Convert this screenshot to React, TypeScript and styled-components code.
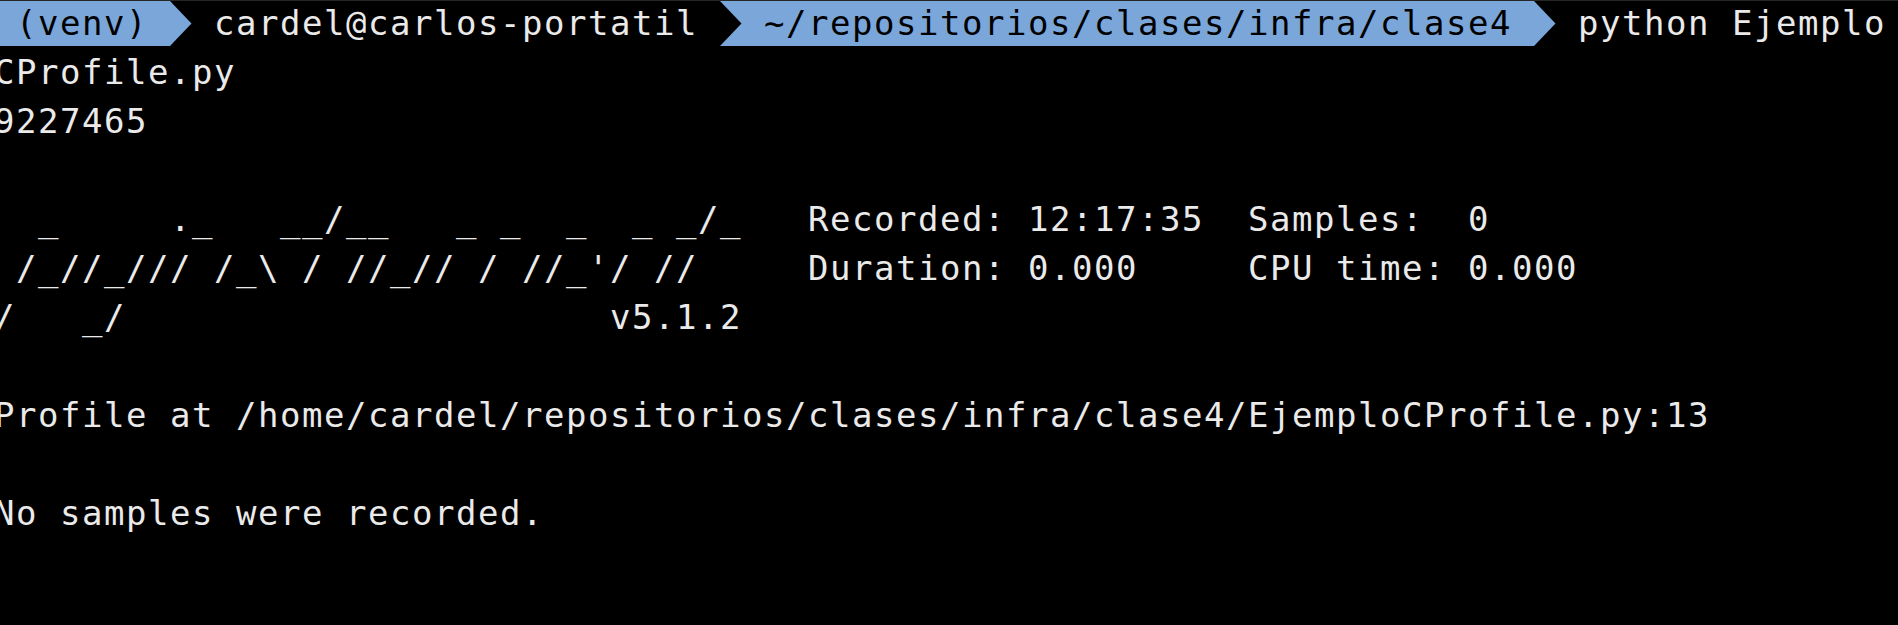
import React from "react";
import styled, { createGlobalStyle } from "styled-components";

const GlobalStyle = createGlobalStyle`
  html, body {
    margin: 0;
    padding: 0;
    background: #000000;
  }
  body {
    overflow: hidden;
  }
`;

const BLUE = "#7aa6da";
const FG = "#eaeaea";

const Screen = styled.div`
  width: 1898px;
  height: 625px;
  background: #000000;
  overflow: hidden;
  box-sizing: border-box;
  border-top: 1px solid #262626;
`;

const Grid = styled.div`
  margin: -2px 0 0 -6px;
  font-family: "DejaVu Sans Mono", "Liberation Mono", monospace;
  font-size: 34px;
  letter-spacing: 1.53px;
  line-height: 49px;
  color: ${FG};
  white-space: pre;
`;

const Line = styled.div`
  height: 49px;
`;

const PromptLine = styled.div`
  height: 49px;
  box-sizing: border-box;
  padding-top: 2px;
  display: flex;
  align-items: flex-start;
`;

const Segment = styled.span<{ $bg?: string; $fg?: string }>`
  display: inline-block;
  height: 45px;
  line-height: 45px;
  background: ${(p) => p.$bg ?? "transparent"};
  color: ${(p) => p.$fg ?? FG};
`;

const ArrowCell = styled.span<{ $bg: string }>`
  display: inline-block;
  width: 22px;
  height: 45px;
  background: ${(p) => p.$bg};
  flex: none;

  svg {
    display: block;
  }
`;

const Arrow: React.FC<{ bg: string; fill: string }> = ({ bg, fill }) => (
  <ArrowCell $bg={bg}>
    <svg width="22" height="45" viewBox="0 0 22 45">
      <polygon points="0,0 21.5,22.5 0,45" fill={fill} />
    </svg>
  </ArrowCell>
);

export default function App() {
  return (
    <>
      <GlobalStyle />
      <Screen>
        <Grid>
          <PromptLine>
            <Segment $bg={BLUE} $fg="#000000">{" (venv) "}</Segment>
            <Arrow bg="#000000" fill={BLUE} />
            <Segment>{" cardel@carlos-portatil "}</Segment>
            <Arrow bg={BLUE} fill="#000000" />
            <Segment $bg={BLUE} $fg="#000000">{" ~/repositorios/clases/infra/clase4 "}</Segment>
            <Arrow bg="#000000" fill={BLUE} />
            <Segment>{" python Ejemplo"}</Segment>
          </PromptLine>
          <Line>CProfile.py</Line>
          <Line>9227465</Line>
          <Line>{" "}</Line>
          <Line>{"  _     ._   __/__   _ _  _  _ _/_   Recorded: 12:17:35  Samples:  0"}</Line>
          <Line>{" /_//_/// /_\\ / //_// / //_'/ //     Duration: 0.000     CPU time: 0.000"}</Line>
          <Line>{"/   _/                      v5.1.2"}</Line>
          <Line>{" "}</Line>
          <Line>{"Profile at /home/cardel/repositorios/clases/infra/clase4/EjemploCProfile.py:13"}</Line>
          <Line>{" "}</Line>
          <Line>{"No samples were recorded."}</Line>
          <Line>{" "}</Line>
        </Grid>
      </Screen>
    </>
  );
}
